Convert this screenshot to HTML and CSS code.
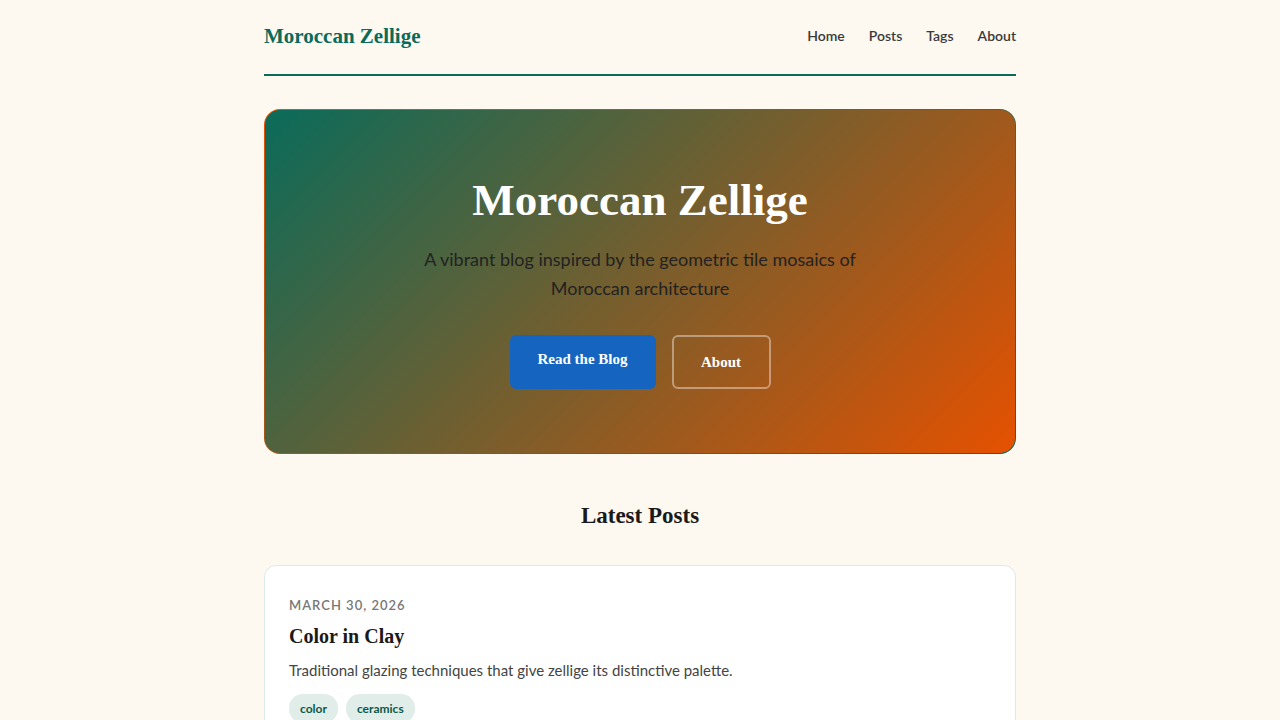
FILE: index.html
```html
<!DOCTYPE html>
<html lang="en">
<head>
    <meta charset="UTF-8">
    <meta name="viewport" content="width=device-width, initial-scale=1.0">
    <title>Moroccan Zellige</title>
    <link rel="stylesheet" href="styles.css">
</head>
<body>
    <div class="wrap">
        <header class="site-header">
            <a class="brand" href="#">Moroccan Zellige</a>
            <nav class="nav">
                <a href="#">Home</a>
                <a href="#">Posts</a>
                <a href="#">Tags</a>
                <a href="#">About</a>
            </nav>
        </header>

        <section class="hero">
            <h1>Moroccan Zellige</h1>
            <p>A vibrant blog inspired by the geometric tile mosaics of Moroccan architecture</p>
            <div class="hero-actions">
                <a class="btn btn-primary" href="#">Read the Blog</a>
                <a class="btn btn-outline" href="#">About</a>
            </div>
        </section>

        <h2 class="section-title">Latest Posts</h2>

        <article class="post-card">
            <div class="post-date">March 30, 2026</div>
            <h3 class="post-title">Color in Clay</h3>
            <p class="post-desc">Traditional glazing techniques that give zellige its distinctive palette.</p>
            <div class="tags">
                <span class="tag">color</span>
                <span class="tag">ceramics</span>
            </div>
        </article>
    </div>
</body>
</html>
```

FILE: styles.css
```css
body {
    margin: 0;
    background-color: #fdf8f0;
    font-family: Lato, "Noto Sans", sans-serif;
    color: #2a2a2a;
}
a {
    text-decoration: none;
}
.wrap {
    max-width: 752px;
    margin: 0 auto;
}
.site-header {
    display: flex;
    justify-content: space-between;
    align-items: center;
    height: 72px;
    padding-bottom: 2px;
    border-bottom: 2px solid #0a6b5a;
}
.brand {
    font-family: "Liberation Serif", serif;
    font-weight: bold;
    font-size: 21px;
    color: #0a6b5a;
}
.nav {
    display: flex;
    gap: 24px;
    padding-bottom: 2px;
}
.nav a {
    font-size: 14px;
    font-weight: 600;
    color: #3a3a3a;
}
.hero {
    margin-top: 33px;
    height: 345px;
    box-sizing: border-box;
    border: 1px solid transparent;
    border-radius: 16px;
    background: linear-gradient(135deg, #0a6b5a 0%, #e65100 100%) padding-box,
                linear-gradient(135deg, #e65100 0%, #0a6b5a 100%) border-box;
    text-align: center;
    padding-top: 62px;
}
.hero h1 {
    margin: 0;
    font-family: "Liberation Serif", serif;
    font-size: 45px;
    font-weight: bold;
    color: #fff;
    line-height: 56px;
}
.hero p {
    margin: 17px auto 0;
    max-width: 440px;
    font-size: 18px;
    line-height: 29px;
    color: #222;
}
.hero-actions {
    display: flex;
    justify-content: center;
    gap: 16px;
    margin-top: 32px;
}
.btn {
    display: inline-flex;
    align-items: center;
    justify-content: center;
    height: 54px;
    box-sizing: border-box;
    border-radius: 6px;
    font-family: "Liberation Serif", serif;
    font-weight: bold;
    font-size: 15px;
    color: #fff;
}
.btn-primary {
    width: 146px;
    background-color: #1565c0;
    padding-bottom: 6px;
}
.btn-outline {
    width: 99px;
    border: 2px solid rgba(255,255,255,0.4);
}
.section-title {
    text-align: center;
    font-family: "Liberation Serif", serif;
    font-size: 23px;
    color: #1a1a1a;
    margin: 49px 0 36px;
}
.post-card {
    background-color: #fff;
    border: 1px solid #dcebe7;
    border-radius: 12px;
    padding: 31px 24px 24px;
}
.post-date {
    font-size: 13px;
    font-weight: 600;
    letter-spacing: 1px;
    text-transform: uppercase;
    color: #777;
}
.post-title {
    margin: 12px 0 0;
    font-family: "Liberation Serif", serif;
    font-size: 20px;
    color: #1a1a1a;
}
.post-desc {
    margin: 13px 0 0;
    font-size: 15px;
    color: #444;
}
.tags {
    display: flex;
    gap: 8px;
    margin-top: 15px;
}
.tag {
    background-color: #e1ede9;
    color: #0a5a4a;
    font-size: 12px;
    font-weight: bold;
    padding: 7px 11px;
    border-radius: 14px;
}
```
